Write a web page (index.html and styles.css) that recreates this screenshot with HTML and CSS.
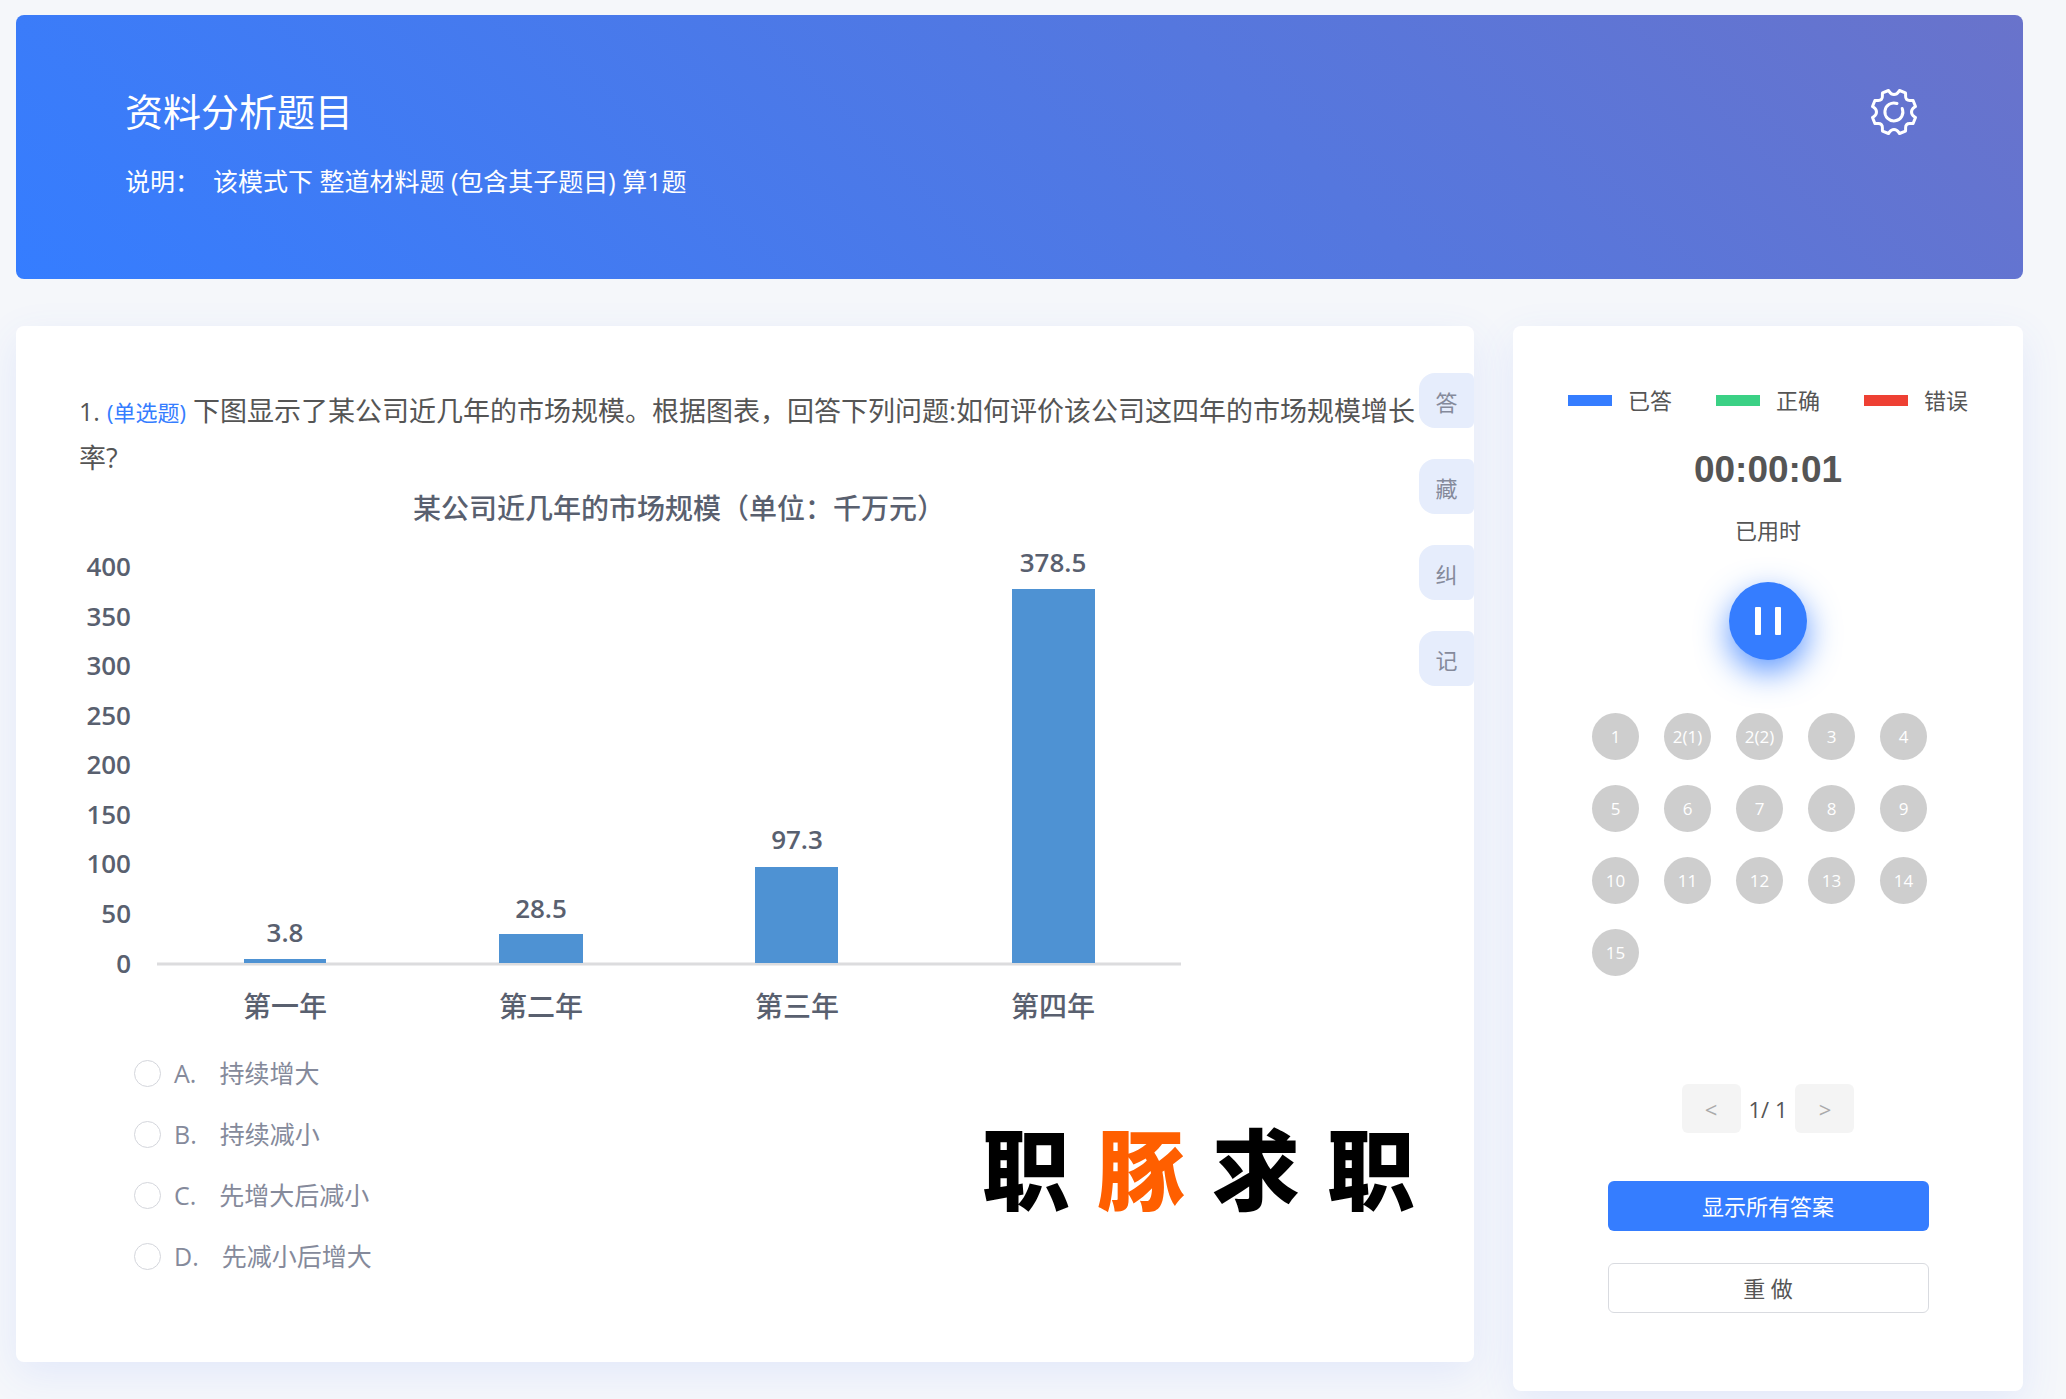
FILE: index.html
```html
<!DOCTYPE html>
<html lang="zh-CN">
<head>
<meta charset="utf-8">
<title>资料分析题目</title>
<link rel="stylesheet" href="styles.css">
</head>
<body>
<div class="page">
  <header class="banner">
    <div class="banner-text">
      <h1>资料分析题目</h1>
      <p>说明：&nbsp; 该模式下 整道材料题 (包含其子题目) 算1题</p>
    </div>
    <button class="settings" type="button" aria-label="设置">
      <svg viewBox="0 0 48 48" width="48" height="48" fill="none" stroke="#fff" stroke-width="3" stroke-linecap="round" stroke-linejoin="round">
        <path d="M18.500 2.500 C20 4.500 20.500 6.500 24 6.500 C27.500 6.500 28 4.500 29.500 2.500 L35.500 4.900 C36 8 34.800 9.600 36.600 11.400 C38.400 13.200 40 12 43.100 12.500 L45.500 18.500 C43.500 20 41.500 20.500 41.500 24 C41.500 27.500 43.500 28 45.500 29.500 L43.100 35.500 C40 36 38.400 34.800 36.600 36.600 C34.800 38.400 36 40 35.500 43.100 L29.500 45.500 C28 43.500 27.500 41.500 24 41.500 C20.500 41.500 20 43.500 18.500 45.500 L12.500 43.100 C12 40 13.200 38.400 11.400 36.600 C9.600 34.800 8 36 4.900 35.500 L2.500 29.500 C4.500 28 6.500 27.500 6.500 24 C6.500 20.500 4.500 20 2.500 18.500 L4.900 12.500 C8 12 9.600 13.200 11.400 11.400 C13.200 9.600 12 8 12.500 4.900 Z"/>
        <path d="M27 15.500 A9 9 0 1 0 32.200 20.500"/>
      </svg>
    </button>
  </header>

  <main class="columns">
    <section class="card question">
      <div class="stem"><span class="num">1.</span> <span class="kind">(单选题)</span> 下图显示了某公司近几年的市场规模。根据图表，回答下列问题:如何评价该公司这四年的市场规模增长率?</div>

      <svg class="chart" viewBox="0 0 1110 550" role="img" aria-label="某公司近几年的市场规模">
        <text class="chart-title" x="599" y="38">某公司近几年的市场规模（单位：千万元）</text>
        <g class="scale">
          <text x="51" y="95">400</text>
          <text x="51" y="145">350</text>
          <text x="51" y="194">300</text>
          <text x="51" y="244">250</text>
          <text x="51" y="293">200</text>
          <text x="51" y="343">150</text>
          <text x="51" y="392">100</text>
          <text x="51" y="442">50</text>
          <text x="51" y="492">0</text>
        </g>
        <path d="M77 483H1101" stroke="#dcdcde" stroke-width="3"/>
        <g fill="#4e92d3">
          <rect x="164" y="478" width="82" height="4"/>
          <rect x="419" y="453" width="84" height="29"/>
          <rect x="675" y="386" width="83" height="96"/>
          <rect x="932" y="108" width="83" height="374"/>
        </g>
        <g class="value">
          <text x="205" y="461">3.8</text>
          <text x="461" y="437">28.5</text>
          <text x="717" y="368">97.3</text>
          <text x="973" y="91">378.5</text>
        </g>
        <g class="year">
          <text x="205" y="536">第一年</text>
          <text x="461" y="536">第二年</text>
          <text x="717" y="536">第三年</text>
          <text x="973" y="536">第四年</text>
        </g>
      </svg>

      <div class="answer">
        <div class="options">
          <label class="option"><input type="radio" name="q1"><span>A.</span><span>持续增大</span></label>
          <label class="option"><input type="radio" name="q1"><span>B.</span><span>持续减小</span></label>
          <label class="option"><input type="radio" name="q1"><span>C.</span><span>先增大后减小</span></label>
          <label class="option"><input type="radio" name="q1"><span>D.</span><span>先减小后增大</span></label>
        </div>
        <div class="brand"><span>职</span><span class="accent">豚</span><span>求</span><span>职</span></div>
      </div>

      <div class="tabs">
        <button type="button">答</button>
        <button type="button">藏</button>
        <button type="button">纠</button>
        <button type="button">记</button>
      </div>
    </section>

    <aside class="card panel">
      <ul class="legend">
        <li><i class="done"></i>已答</li>
        <li><i class="right"></i>正确</li>
        <li><i class="wrong"></i>错误</li>
      </ul>
      <div class="timer">00:00:01</div>
      <div class="timer-label">已用时</div>
      <button class="pause" type="button" aria-label="暂停"><i></i><i></i></button>
      <div class="numbers">
        <button type="button">1</button>
        <button type="button">2(1)</button>
        <button type="button">2(2)</button>
        <button type="button">3</button>
        <button type="button">4</button>
        <button type="button">5</button>
        <button type="button">6</button>
        <button type="button">7</button>
        <button type="button">8</button>
        <button type="button">9</button>
        <button type="button">10</button>
        <button type="button">11</button>
        <button type="button">12</button>
        <button type="button">13</button>
        <button type="button">14</button>
        <button type="button">15</button>
      </div>
      <div class="pager">
        <button type="button" disabled>&lt;</button>
        <span>1/ 1</span>
        <button type="button" disabled>&gt;</button>
      </div>
      <div class="actions">
        <button class="primary" type="button">显示所有答案</button>
        <button class="plain" type="button">重 做</button>
      </div>
    </aside>
  </main>
</div>
</body>
</html>
```
FILE: styles.css
```css
* { box-sizing: border-box; }

body {
  margin: 0;
  background: #f5f7fa;
  color: #555;
  font-family: "Open Sans", "Noto Sans CJK SC", sans-serif;
  font-weight: 400;
}

button {
  margin: 0;
  padding: 0;
  border: 0;
  font: inherit;
  cursor: pointer;
}

.page { padding: 15px 43px 8px 16px; }

.banner {
  display: flex;
  justify-content: space-between;
  align-items: flex-start;
  min-height: 264px;
  padding: 67px 105px 67px 109px;
  border-radius: 8px;
  background: linear-gradient(45deg, #357dff, #5577de 62%, #6973cb);
  color: #fff;
}

.banner h1 {
  margin: 0;
  font-family: "Noto Sans CJK SC", sans-serif;
  font-size: 38px;
  font-weight: 400;
  line-height: 56px;
}

.banner p {
  margin: 24px 0 0;
  font-size: 25px;
  line-height: 38px;
}

.settings {
  width: 48px;
  height: 48px;
  margin-top: 6px;
  background: none;
}

.settings svg { display: block; }

.columns {
  display: flex;
  align-items: flex-start;
  gap: 39px;
  margin-top: 47px;
}

.card {
  border-radius: 8px;
  background: #fff;
  box-shadow: 0 12px 40px rgba(64, 110, 255, 0.1);
}

.question {
  position: relative;
  flex: 1;
  min-width: 0;
  padding: 62px 56px 87px 63px;
}

.stem {
  margin-right: -8px;
  font-size: 27px;
  line-height: 46px;
}

.num { font-size: 25px; }
.kind { color: #357dff; font-size: 22px; }

.chart {
  display: block;
  width: 1110px;
  max-width: 100%;
  height: auto;
  margin-left: 1px;
  fill: #59606f;
  font-size: 28px;
  font-weight: 500;
}

.chart-title, .value, .year { text-anchor: middle; }
.scale { text-anchor: end; }
.scale, .value { font-size: 26px; font-weight: 600; }

.answer {
  display: flex;
  justify-content: space-between;
  align-items: center;
  margin-top: 23px;
  padding-left: 55px;
}

.options {
  display: grid;
  gap: 23px;
}

.option {
  display: flex;
  align-items: center;
  color: #858a9b;
  font-size: 25px;
  line-height: 38px;
}

.option input {
  appearance: none;
  width: 27px;
  height: 27px;
  margin: 0 13px 0 0;
  border: 1px solid #d4d6dc;
  border-radius: 50%;
  background: #fff;
}

.option span + span { margin-left: 23px; }

.brand {
  display: flex;
  gap: 27px;
  margin-right: 3px;
  color: #000;
  font-family: "Noto Sans CJK SC", sans-serif;
  font-size: 88px;
  font-weight: 900;
  line-height: 88px;
}

.brand .accent { color: #ff5f00; }

.tabs {
  position: absolute;
  top: 47px;
  right: 0;
  display: grid;
  gap: 31px;
}

.tabs button {
  width: 55px;
  height: 55px;
  border-radius: 16px 6px 6px 16px;
  background: #e6edfc;
  color: #858a9b;
  font-size: 22px;
}

.panel {
  display: flex;
  flex-direction: column;
  align-items: center;
  width: 510px;
  padding: 58px 0 78px;
  font-size: 22px;
  line-height: 32px;
}

.legend {
  display: flex;
  gap: 44px;
  margin: 0;
  padding: 0;
  list-style: none;
}

.legend li {
  display: flex;
  align-items: center;
  gap: 16px;
}

.legend i { width: 44px; height: 11px; }
.done { background: #357dff; }
.right { background: #3bd185; }
.wrong { background: #ee4033; }

.timer {
  margin-top: 33px;
  font-family: "Liberation Sans", sans-serif;
  font-size: 37px;
  font-weight: 700;
  line-height: 42px;
}

.timer-label { margin-top: 23px; }

.pause {
  display: flex;
  justify-content: center;
  align-items: center;
  gap: 14px;
  width: 78px;
  height: 78px;
  margin-top: 36px;
  border-radius: 50%;
  background: #357dff;
  box-shadow: 0 12px 32px rgba(53, 125, 255, 0.8);
}

.pause i {
  width: 6px;
  height: 28px;
  border-radius: 1px;
  background: #fff;
}

.numbers {
  display: grid;
  grid-template-columns: repeat(5, 47px);
  gap: 25px;
  margin: 53px 17px 0 0;
}

.numbers button {
  height: 47px;
  border-radius: 50%;
  background: #cecece;
  color: #fff;
  font-size: 17px;
  font-weight: 500;
}

.pager {
  display: flex;
  align-items: center;
  justify-content: space-between;
  width: 173px;
  margin-top: 108px;
}

.pager button {
  width: 59px;
  height: 49px;
  border-radius: 6px;
  background: #f4f4f4;
  color: #aaa;
  font-size: 22px;
}

.actions {
  display: grid;
  gap: 32px;
  width: 321px;
  margin-top: 48px;
}

.actions button {
  height: 50px;
  border-radius: 6px;
}

.primary { background: #357dff; color: #fff; }

.actions .plain {
  border: 1px solid #d9dbe0;
  background: #fff;
  color: #555;
}
```
